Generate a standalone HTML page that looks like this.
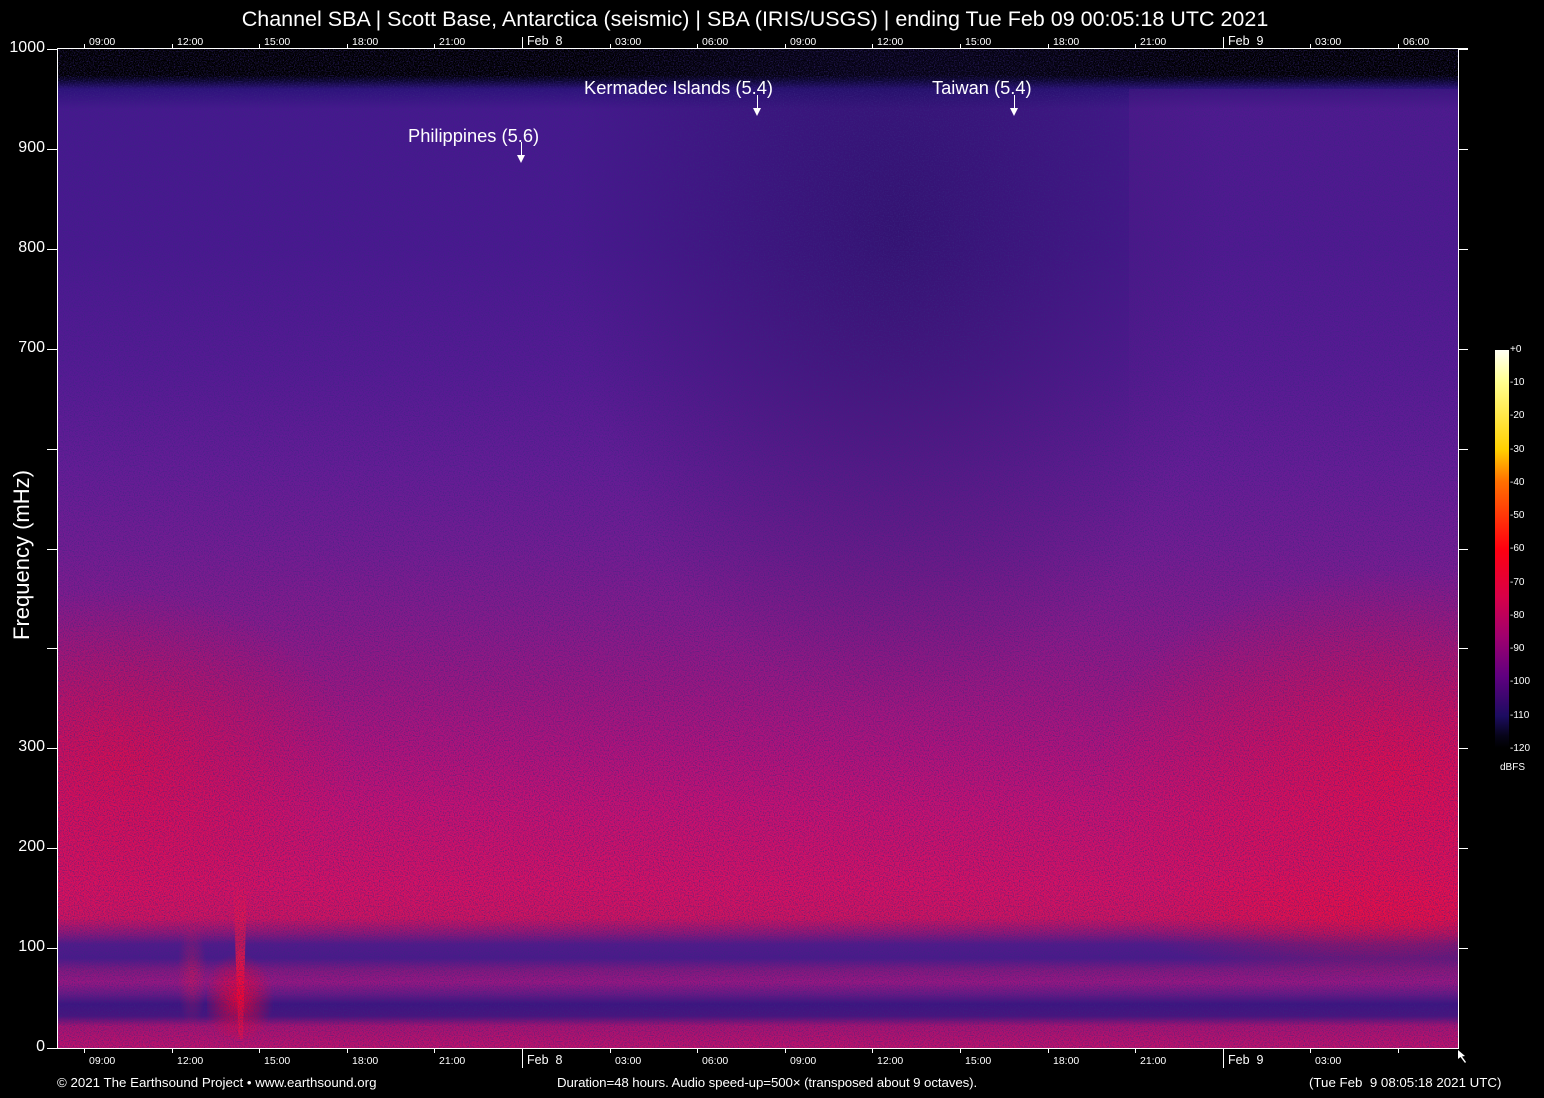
<!DOCTYPE html>
<html><head><meta charset="utf-8"><style>
*{margin:0;padding:0;box-sizing:border-box}
body{width:1544px;height:1098px;background:#000;position:relative;overflow:hidden;font-family:"Liberation Sans",Arial,sans-serif;color:#fff}
.a{position:absolute}
#plot{left:57px;top:49px;width:1401px;height:999px;overflow:hidden;
background:linear-gradient(to bottom,#000 0%,#000 2.6%,#0c0630 3.2%,#2c127a 4%,#46188e 6%,#4a1890 20%,#561a94 32%,#661c96 42%,#741c92 50%,#861a8a 57%,#9c1680 64%,#b2127a 70%,#c81070 76%,#d01068 80%,#d81062 84%,#d0125e 87%,#901676 88.5%,#521a8a 89.6%,#4a1a8a 91%,#82187e 92.2%,#9a1680 93.4%,#6a1884 94.6%,#3c1480 95.6%,#48147e 96.8%,#a81270 97.8%,#c0106a 100%)}
.tk{position:absolute;background:#fff}
.tl{position:absolute;font-size:10.5px;color:#fff}
.yl{position:absolute;font-size:16px;color:#fff;text-align:right;width:45px;left:0}
.ann{position:absolute;font-size:18.3px;color:#fff;white-space:nowrap}
.cb{position:absolute;font-size:10px;color:#fff}
</style></head><body>
<div class="a" style="left:0;top:7px;width:1510px;text-align:center;font-size:21.5px">Channel SBA | Scott Base, Antarctica (seismic) | SBA (IRIS/USGS) | ending Tue Feb 09 00:05:18 UTC 2021</div>

<div id="plot" class="a">
 <div class="a" style="left:0;top:0;width:1401px;height:999px;background:
 radial-gradient(ellipse 240px 170px at 60px 710px,rgba(240,10,50,0.55),transparent),
 radial-gradient(ellipse 300px 200px at 1340px 720px,rgba(250,10,50,0.6),transparent),
 radial-gradient(ellipse 260px 60px at 1330px 870px,rgba(250,10,50,0.5),transparent),
 radial-gradient(ellipse 330px 480px at 840px 180px,rgba(20,10,70,0.4),transparent)"></div>
 <div class="a" style="left:1072px;top:40px;width:329px;height:500px;background:linear-gradient(to bottom,rgba(120,30,150,0.2),transparent)"></div>
 <div class="a" style="left:176px;top:830px;width:14px;height:160px;clip-path:polygon(0 0,100% 0,70% 100%,40% 100%);background:linear-gradient(to bottom,rgba(255,20,60,0),rgba(255,20,60,.8),rgba(255,20,60,.4))"></div>
 <div class="a" style="left:150px;top:900px;width:70px;height:90px;background:radial-gradient(ellipse at 45% 55%,rgba(255,0,40,0.85),transparent 65%)"></div>
 <div class="a" style="left:120px;top:870px;width:30px;height:110px;background:radial-gradient(ellipse at 50% 50%,rgba(230,20,70,0.45),transparent 70%)"></div>
 <svg class="a" style="left:0;top:0" width="1401" height="999">
  <filter id="n"><feTurbulence type="fractalNoise" baseFrequency="0.8" numOctaves="2" seed="3"/><feColorMatrix values="0 0 0 0 0.04  0 0 0 0 0.02  0 0 0 0 0.22  0 0 0 -2.6 1.45"/></filter>
  <rect x="0" y="32" width="1401" height="967" filter="url(#n)" opacity="0.7"/>
 </svg>
</div>
<div class="tk" style="left:57px;top:48px;width:1411px;height:1px"></div>
<div class="tk" style="left:57px;top:1048px;width:1401px;height:1px"></div>
<div class="tk" style="left:57px;top:49px;width:1px;height:1000px"></div>
<div class="tk" style="left:1458px;top:49px;width:1px;height:1000px"></div>

<div class="tk" style="left:84px;top:44px;width:1px;height:5px"></div><div class="tl" style="left:89px;top:36px">09:00</div>
<div class="tk" style="left:172px;top:44px;width:1px;height:5px"></div><div class="tl" style="left:177px;top:36px">12:00</div>
<div class="tk" style="left:259px;top:44px;width:1px;height:5px"></div><div class="tl" style="left:264px;top:36px">15:00</div>
<div class="tk" style="left:347px;top:44px;width:1px;height:5px"></div><div class="tl" style="left:352px;top:36px">18:00</div>
<div class="tk" style="left:434px;top:44px;width:1px;height:5px"></div><div class="tl" style="left:439px;top:36px">21:00</div>
<div class="tk" style="left:522px;top:37px;width:1px;height:12px"></div><div class="tl" style="left:527px;top:34px;font-size:12.5px">Feb&nbsp; 8</div>
<div class="tk" style="left:610px;top:44px;width:1px;height:5px"></div><div class="tl" style="left:615px;top:36px">03:00</div>
<div class="tk" style="left:697px;top:44px;width:1px;height:5px"></div><div class="tl" style="left:702px;top:36px">06:00</div>
<div class="tk" style="left:785px;top:44px;width:1px;height:5px"></div><div class="tl" style="left:790px;top:36px">09:00</div>
<div class="tk" style="left:872px;top:44px;width:1px;height:5px"></div><div class="tl" style="left:877px;top:36px">12:00</div>
<div class="tk" style="left:960px;top:44px;width:1px;height:5px"></div><div class="tl" style="left:965px;top:36px">15:00</div>
<div class="tk" style="left:1048px;top:44px;width:1px;height:5px"></div><div class="tl" style="left:1053px;top:36px">18:00</div>
<div class="tk" style="left:1135px;top:44px;width:1px;height:5px"></div><div class="tl" style="left:1140px;top:36px">21:00</div>
<div class="tk" style="left:1223px;top:37px;width:1px;height:12px"></div><div class="tl" style="left:1228px;top:34px;font-size:12.5px">Feb&nbsp; 9</div>
<div class="tk" style="left:1310px;top:44px;width:1px;height:5px"></div><div class="tl" style="left:1315px;top:36px">03:00</div>
<div class="tk" style="left:1398px;top:44px;width:1px;height:5px"></div><div class="tl" style="left:1403px;top:36px">06:00</div>

<div class="tk" style="left:84px;top:1048px;width:1px;height:5px"></div><div class="tl" style="left:89px;top:1055px">09:00</div>
<div class="tk" style="left:172px;top:1048px;width:1px;height:5px"></div><div class="tl" style="left:177px;top:1055px">12:00</div>
<div class="tk" style="left:259px;top:1048px;width:1px;height:5px"></div><div class="tl" style="left:264px;top:1055px">15:00</div>
<div class="tk" style="left:347px;top:1048px;width:1px;height:5px"></div><div class="tl" style="left:352px;top:1055px">18:00</div>
<div class="tk" style="left:434px;top:1048px;width:1px;height:5px"></div><div class="tl" style="left:439px;top:1055px">21:00</div>
<div class="tk" style="left:522px;top:1048px;width:1px;height:20px"></div><div class="tl" style="left:527px;top:1053px;font-size:12.5px">Feb&nbsp; 8</div>
<div class="tk" style="left:610px;top:1048px;width:1px;height:5px"></div><div class="tl" style="left:615px;top:1055px">03:00</div>
<div class="tk" style="left:697px;top:1048px;width:1px;height:5px"></div><div class="tl" style="left:702px;top:1055px">06:00</div>
<div class="tk" style="left:785px;top:1048px;width:1px;height:5px"></div><div class="tl" style="left:790px;top:1055px">09:00</div>
<div class="tk" style="left:872px;top:1048px;width:1px;height:5px"></div><div class="tl" style="left:877px;top:1055px">12:00</div>
<div class="tk" style="left:960px;top:1048px;width:1px;height:5px"></div><div class="tl" style="left:965px;top:1055px">15:00</div>
<div class="tk" style="left:1048px;top:1048px;width:1px;height:5px"></div><div class="tl" style="left:1053px;top:1055px">18:00</div>
<div class="tk" style="left:1135px;top:1048px;width:1px;height:5px"></div><div class="tl" style="left:1140px;top:1055px">21:00</div>
<div class="tk" style="left:1223px;top:1048px;width:1px;height:20px"></div><div class="tl" style="left:1228px;top:1053px;font-size:12.5px">Feb&nbsp; 9</div>
<div class="tk" style="left:1310px;top:1048px;width:1px;height:5px"></div><div class="tl" style="left:1315px;top:1055px">03:00</div>
<div class="tk" style="left:1398px;top:1048px;width:1px;height:5px"></div>
<svg class="a" style="left:1456px;top:1049px" width="14" height="22"><path d="M2 1 L2 10 L4.5 8 L9 14 L10 13 L6 7.5 L9 7 Z" fill="#fff"/></svg>

<div class="tk" style="left:47px;top:49px;width:10px;height:1px"></div><div class="tk" style="left:1458px;top:49px;width:10px;height:1px"></div>
<div class="tk" style="left:47px;top:149px;width:10px;height:1px"></div><div class="tk" style="left:1458px;top:149px;width:10px;height:1px"></div>
<div class="tk" style="left:47px;top:249px;width:10px;height:1px"></div><div class="tk" style="left:1458px;top:249px;width:10px;height:1px"></div>
<div class="tk" style="left:47px;top:349px;width:10px;height:1px"></div><div class="tk" style="left:1458px;top:349px;width:10px;height:1px"></div>
<div class="tk" style="left:47px;top:449px;width:10px;height:1px"></div><div class="tk" style="left:1458px;top:449px;width:10px;height:1px"></div>
<div class="tk" style="left:47px;top:549px;width:10px;height:1px"></div><div class="tk" style="left:1458px;top:549px;width:10px;height:1px"></div>
<div class="tk" style="left:47px;top:648px;width:10px;height:1px"></div><div class="tk" style="left:1458px;top:648px;width:10px;height:1px"></div>
<div class="tk" style="left:47px;top:748px;width:10px;height:1px"></div><div class="tk" style="left:1458px;top:748px;width:10px;height:1px"></div>
<div class="tk" style="left:47px;top:848px;width:10px;height:1px"></div><div class="tk" style="left:1458px;top:848px;width:10px;height:1px"></div>
<div class="tk" style="left:47px;top:948px;width:10px;height:1px"></div><div class="tk" style="left:1458px;top:948px;width:10px;height:1px"></div>
<div class="tk" style="left:47px;top:1048px;width:10px;height:1px"></div>
<div class="yl" style="top:39px">1000</div>
<div class="yl" style="top:139px">900</div>
<div class="yl" style="top:239px">800</div>
<div class="yl" style="top:339px">700</div>
<div class="yl" style="top:738px">300</div>
<div class="yl" style="top:838px">200</div>
<div class="yl" style="top:938px">100</div>
<div class="yl" style="top:1038px">0</div>
<div class="a" style="left:22px;top:555px;transform:translate(-50%,-50%) rotate(-90deg);font-size:22px;white-space:nowrap">Frequency (mHz)</div>

<div class="ann" style="left:408px;top:125px">Philippines (5.6)</div>
<div class="tk" style="left:521px;top:142px;width:1px;height:14px"></div>
<div class="a" style="left:517px;top:155px;border-left:4.5px solid transparent;border-right:4.5px solid transparent;border-top:8px solid #fff"></div>
<div class="ann" style="left:584px;top:77px">Kermadec Islands (5.4)</div>
<div class="tk" style="left:757px;top:95px;width:1px;height:14px"></div>
<div class="a" style="left:753px;top:108px;border-left:4.5px solid transparent;border-right:4.5px solid transparent;border-top:8px solid #fff"></div>
<div class="ann" style="left:932px;top:77px">Taiwan (5.4)</div>
<div class="tk" style="left:1014px;top:95px;width:1px;height:14px"></div>
<div class="a" style="left:1010px;top:108px;border-left:4.5px solid transparent;border-right:4.5px solid transparent;border-top:8px solid #fff"></div>

<div class="a" style="left:1495px;top:350px;width:14px;height:398px;background:linear-gradient(to bottom,#fffff4 0%,#ffff90 8%,#ffd000 25%,#ff7000 33%,#ff0010 50%,#d80048 62%,#a0006e 72%,#600080 82%,#1c0c60 92%,#060418 97%,#000 100%)"></div>
<div class="cb" style="left:1510px;top:344px">+0</div>
<div class="cb" style="left:1510px;top:377px">-10</div>
<div class="cb" style="left:1510px;top:410px">-20</div>
<div class="cb" style="left:1510px;top:444px">-30</div>
<div class="cb" style="left:1510px;top:477px">-40</div>
<div class="cb" style="left:1510px;top:510px">-50</div>
<div class="cb" style="left:1510px;top:543px">-60</div>
<div class="cb" style="left:1510px;top:577px">-70</div>
<div class="cb" style="left:1510px;top:610px">-80</div>
<div class="cb" style="left:1510px;top:643px">-90</div>
<div class="cb" style="left:1510px;top:676px">-100</div>
<div class="cb" style="left:1510px;top:710px">-110</div>
<div class="cb" style="left:1510px;top:743px">-120</div>
<div class="cb" style="left:1500px;top:762px">dBFS</div>

<div class="a" style="left:57px;top:1075px;font-size:13.3px">© 2021 The Earthsound Project • www.earthsound.org</div>
<div class="a" style="left:557px;top:1075px;font-size:13.3px;letter-spacing:-0.1px">Duration=48 hours. Audio speed-up=500× (transposed about 9 octaves).</div>
<div class="a" style="left:1309px;top:1075px;font-size:13.3px">(Tue Feb&nbsp; 9 08:05:18 2021 UTC)</div>
</body></html>
